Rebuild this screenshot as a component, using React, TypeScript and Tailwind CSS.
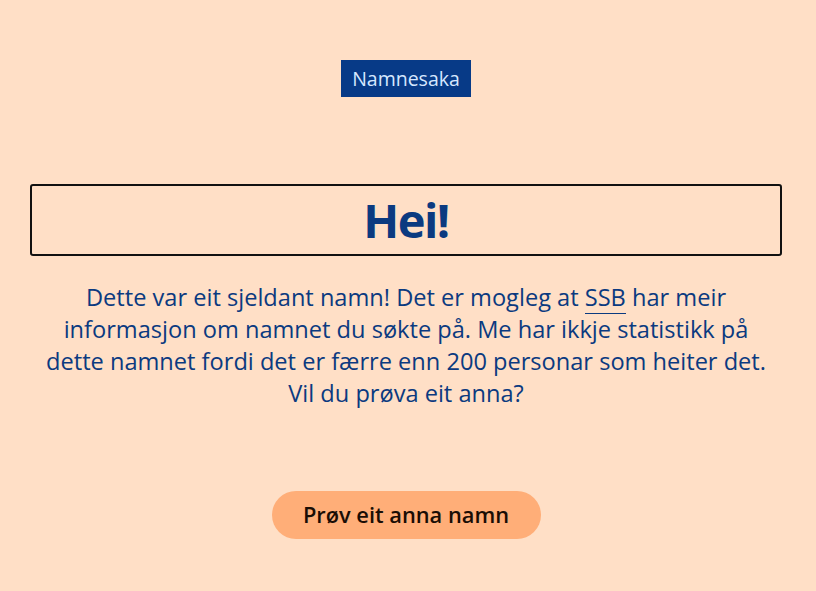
export default function App() {
  return (
    <div className="min-h-[591px] w-full bg-[#ffdfc6] font-['Open_Sans',sans-serif] text-[#0b3a80]">
      <div className="flex flex-col items-center pr-[4px] pt-[60px]">
        <span className="bg-[#073a87] px-[11px] py-[5px] text-[19.5px] leading-[27px] text-[#d6e8ff]">Namnesaka</span>

        <div className="mt-[87px] flex h-[72px] w-[752px] items-center justify-center rounded-[3px] border-2 border-[#111]">
          <h1 className="text-[47px] font-bold tracking-[-1.5px] text-[#0b3a80]">Hei!</h1>
        </div>

        <p className="mt-[25px] text-center text-[23.6px] leading-[32px]">
          Dette var eit sjeldant namn! Det er mogleg at{' '}
          <span className="border-b border-[#0b3a80]">SSB</span> har meir
          <br />
          informasjon om namnet du søkte på. Me har ikkje statistikk på
          <br />
          dette namnet fordi det er færre enn 200 personar som heiter det.
          <br />
          Vil du prøva eit anna?
        </p>

        <button className="mt-[82px] h-[48px] w-[269px] rounded-full bg-[#ffae78] text-[21.8px] font-semibold text-[#1a0d05]">
          Prøv eit anna namn
        </button>
      </div>
    </div>
  );
}
